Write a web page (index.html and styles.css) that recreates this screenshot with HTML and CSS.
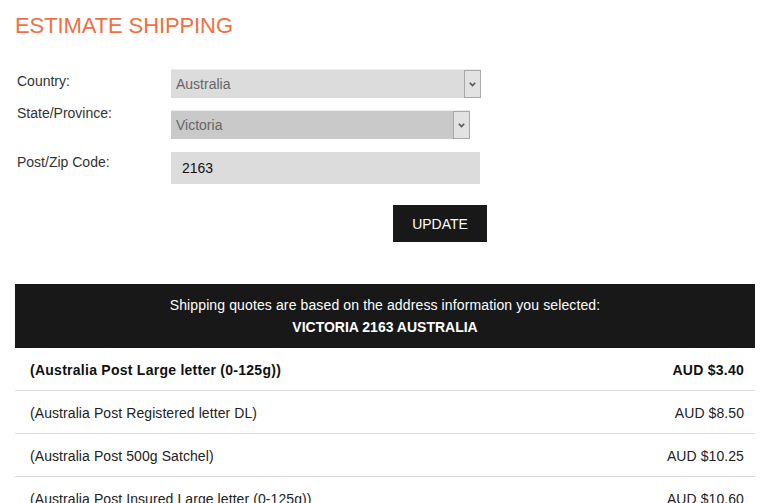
FILE: index.html
```html
<!DOCTYPE html>
<html lang="en">
<head>
<meta charset="utf-8">
<title>Estimate Shipping</title>
<link rel="stylesheet" href="styles.css">
</head>
<body>
<div class="page">
  <h1 class="title">ESTIMATE SHIPPING</h1>
  <form class="form">
    <div class="row row-country">
      <label class="label">Country:</label>
      <div class="select select-country">
        <span class="select-value">Australia</span>
        <span class="select-arrow"><svg width="7" height="5" viewBox="0 0 7 5"><path d="M0.8 0.8 L3.5 3.6 L6.2 0.8" fill="none" stroke="#555" stroke-width="1.6"/></svg></span>
      </div>
    </div>
    <div class="row row-state">
      <label class="label">State/Province:</label>
      <div class="select select-state">
        <span class="select-value">Victoria</span>
        <span class="select-arrow"><svg width="7" height="5" viewBox="0 0 7 5"><path d="M0.8 0.8 L3.5 3.6 L6.2 0.8" fill="none" stroke="#555" stroke-width="1.6"/></svg></span>
      </div>
    </div>
    <div class="row row-zip">
      <label class="label">Post/Zip Code:</label>
      <div class="input">2163</div>
    </div>
    <div class="actions">
      <button type="button" class="btn">UPDATE</button>
    </div>
  </form>

  <div class="quotes">
    <div class="banner">
      <div class="banner-line">Shipping quotes are based on the address information you selected:</div>
      <div class="banner-addr">VICTORIA 2163 AUSTRALIA</div>
    </div>
    <div class="quote quote-selected"><span>(Australia Post Large letter (0-125g))</span><span>AUD $3.40</span></div>
    <div class="quote"><span>(Australia Post Registered letter DL)</span><span>AUD $8.50</span></div>
    <div class="quote"><span>(Australia Post 500g Satchel)</span><span>AUD $10.25</span></div>
    <div class="quote"><span>(Australia Post Insured Large letter (0-125g))</span><span>AUD $10.60</span></div>
  </div>
</div>
</body>
</html>
```

FILE: styles.css
```css
* { box-sizing: border-box; }
html, body { margin: 0; padding: 0; background: #fff; }
body {
  font-family: "Liberation Sans", Arial, sans-serif;
  font-size: 14px;
  line-height: 16px;
  color: #333;
  overflow: hidden;
}
.page { padding: 0 6px 0 15px; width: 761px; }
.title {
  margin: 0;
  padding-top: 13px;
  font-size: 22px;
  line-height: 26px;
  font-weight: normal;
  color: #f07044;
  letter-spacing: -0.1px;
}
.form { margin-top: 30px; }
.row { display: flex; align-items: flex-start; }
.label { width: 156px; padding-left: 2px; color: #333; }
.row-country .label { margin-top: 4px; }
.row-state { margin-top: 7px; }
.row-state .select { margin-top: 5px; }
.row-zip { margin-top: 13px; }
.row-zip .label { margin-top: 2px; }

.select {
  display: flex;
  height: 29px;
  background: #dcdcdc;
  border-top: 1px solid #ececec;
}
.select-country { width: 310px; }
.select-state { width: 299px; background: #c9c9c9; }
.select-value {
  flex: 1;
  padding: 6px 0 0 5px;
  color: #666;
}
.select-arrow {
  width: 17px;
  height: 28px;
  border: 1px solid #a8a8a8;
  background: #e2e2e2;
  display: flex;
  align-items: center;
  justify-content: center;
}
.input {
  width: 309px;
  height: 32px;
  background: #dcdcdc;
  color: #111;
  padding: 8px 0 0 11px;
}
.actions { display: flex; padding-left: 378px; margin-top: 21px; }
.btn {
  width: 94px;
  height: 37px;
  background: #181818;
  color: #fff;
  border: 0;
  font-family: "Liberation Sans", Arial, sans-serif;
  font-size: 14px;
  padding: 1px 0 0;
  cursor: pointer;
}

.quotes { margin-top: 42px; width: 740px; }
.banner {
  background: #181818;
  color: #fff;
  text-align: center;
  height: 64px;
  padding-top: 10px;
  line-height: 22px;
  letter-spacing: 0.12px;
}
.banner-addr { font-weight: bold; letter-spacing: 0; }
.quote {
  display: flex;
  justify-content: space-between;
  height: 43px;
  padding: 14px 11px 0 15px;
  border-bottom: 1px solid #dcdcdc;
  color: #222;
  letter-spacing: 0.08px;
}
.quote-selected { font-weight: bold; color: #111; letter-spacing: 0.26px; }
```
